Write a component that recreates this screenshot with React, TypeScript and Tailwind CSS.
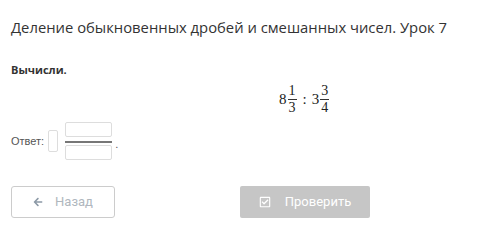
import { FaArrowLeft, FaRegCheckSquare } from "react-icons/fa";

const Frac = ({ n, d }: { n: string; d: string }) => (
  <span className="inline-flex flex-col items-center mx-[1px]">
    <span className="text-[14px] leading-[14px] px-[1px]">{n}</span>
    <span className="w-full h-px mt-[1px] bg-[#333]" />
    <span className="text-[14px] leading-[14px] px-[1px] mt-[1px]">{d}</span>
  </span>
);

const App = () => {
  return (
    <div className="w-[500px] h-[247px] bg-white overflow-hidden px-[11px] pt-[17px] font-['Open_Sans',sans-serif] text-[#333]">
      <h1 className="text-[14.8px] leading-[20px] font-normal whitespace-nowrap">
        Деление обыкновенных дробей и смешанных чисел. Урок 7
      </h1>

      <p className="mt-[25px] text-[11px] leading-[16px] font-bold">Вычисли.</p>

      <div className="mt-[6px] pl-[268px] flex items-center h-[31px] font-['Liberation_Serif',serif] text-[15px] text-[#222]">
        <span>8</span>
        <Frac n="1" d="3" />
        <span className="mx-[5px]">:</span>
        <span>3</span>
        <Frac n="3" d="4" />
      </div>

      <div className="mt-[7px] flex items-center h-[38px] font-['Liberation_Sans',sans-serif]">
        <span className="text-[11px] text-[#555]">Ответ:</span>
        <span className="ml-[4px] w-[10px] h-[22px] border border-[#ddd] rounded-[2px]" />
        <span className="ml-[7px] flex flex-col w-[47px]">
          <span className="h-[15px] border border-[#ddd] rounded-[2px]" />
          <span className="mt-[4px] h-[2px] bg-[#777]" />
          <span className="mt-[2px] h-[15px] border border-[#ddd] rounded-[2px]" />
        </span>
        <span className="ml-[3px] mt-[6px] text-[11px] text-[#555]">.</span>
      </div>

      <div className="mt-[26px] flex items-center font-['Roboto',sans-serif] text-[13px]">
        <button className="w-[104px] h-[32px] flex items-center justify-center gap-[12px] border border-[#ccc] rounded-[3px] bg-white text-[#b0b7be]">
          <FaArrowLeft className="w-[10px] h-[10px] text-[#8c99a6]" />
          <span>Назад</span>
        </button>
        <button className="ml-[125px] w-[130px] h-[32px] flex items-center justify-center gap-[14px] rounded-[2px] bg-[#c6c6c6] text-white">
          <FaRegCheckSquare className="w-[12px] h-[12px]" />
          <span>Проверить</span>
        </button>
      </div>
    </div>
  );
};

export default App;
